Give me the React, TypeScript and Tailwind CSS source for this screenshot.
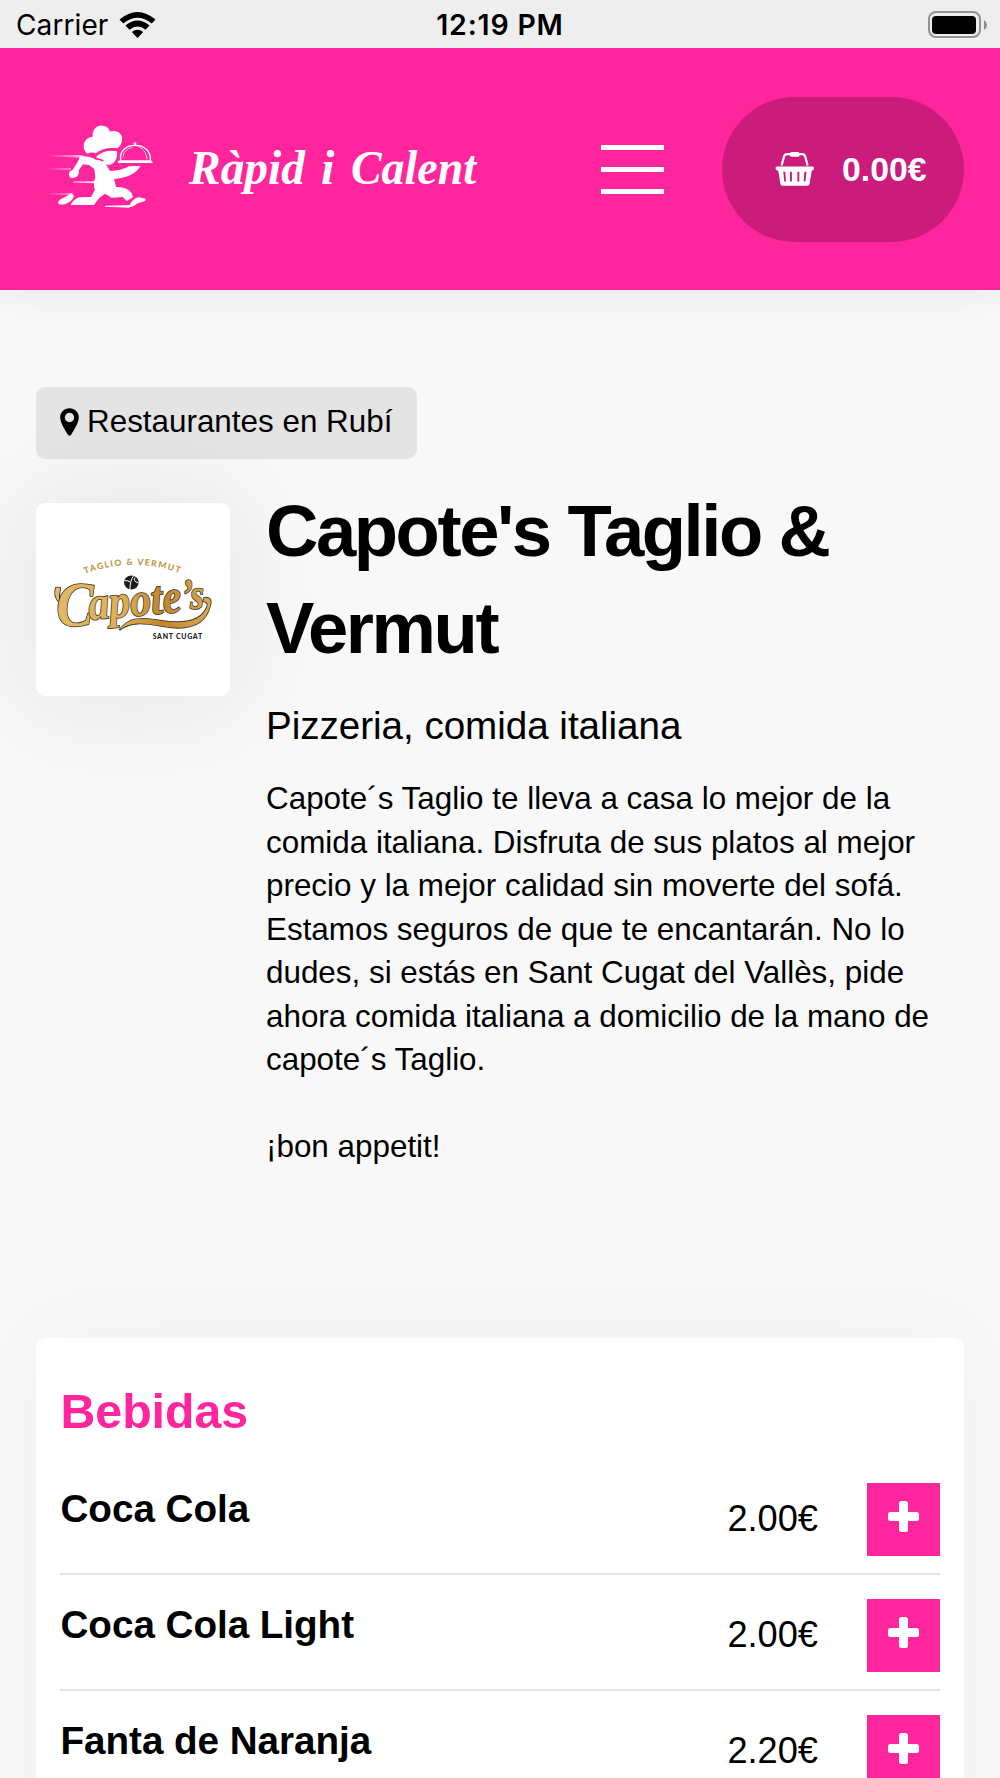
import React from 'react';

interface Product {
  id: number;
  name: string;
  price: string;
}

const products: Product[] = [
  { id: 1, name: 'Coca Cola', price: '2.00€' },
  { id: 2, name: 'Coca Cola Light', price: '2.00€' },
  { id: 3, name: 'Fanta de Naranja', price: '2.20€' },
];

// Status bar
const StatusBar: React.FC = () => (
  <div className="relative z-10 grid h-12 grid-cols-3 items-center bg-[#efeeee] pr-[13px] pl-4 font-['Inter',sans-serif] text-[28px] leading-[48px] text-black">
    <div className="flex items-center gap-[11px] pt-[1px]">
      <span className="tracking-[0.1px]">Carrier</span>
      <svg width="37" height="28" viewBox="0 0 37 28">
        <path d="M.5 8.5Q18.500 -6.500 36.500 8.500L32.700 12.600Q18.500 .8 4.300 12.600Z" />
        <path d="M6.500 14.600Q18.500 4.500 30.500 14.600L26.500 18.700Q18.500 12.200 10.500 18.700Z" />
        <path d="M12.800 21Q18.500 16.300 24.200 21L18.500 27Z" />
      </svg>
    </div>
    <div className="pt-[1px] pr-[3px] text-center text-[28.5px] font-semibold tracking-[0.8px] whitespace-nowrap">12:19 PM</div>
    <div className="flex items-center justify-end gap-[3px]">
      <div className="flex h-[27px] w-[53px] items-center justify-center rounded-[8px] border-2 border-[#929292]">
        <div className="h-[18px] w-[44px] rounded-[4px] bg-black" />
      </div>
      <svg width="3" height="10" viewBox="0 0 3 10">
        <path d="M0 0Q3 2 3 5T0 10Z" fill="#8c8c8c" />
      </svg>
    </div>
  </div>
);

// Running chef with a tray
const ChefLogo: React.FC = () => (
  <svg width="140" height="110" viewBox="0 0 420 330" fill="#fff" className="mb-2">
    <defs>
      <linearGradient id="speed" x1="0" x2="1">
        <stop offset="0" stopColor="#fff" stopOpacity="0" />
        <stop offset=".6" stopColor="#fff" stopOpacity=".9" />
        <stop offset="1" stopColor="#fff" />
      </linearGradient>
    </defs>
    <path d="M172 131C153 115 159 83 188 80C186 55 204 45 216 47C231 47 239 57 239 65C261 58 280 72 276 92C274 105 267 111 261 115C235 111 213 117 198 130Q184 124 172 131Z" />
    <path d="M200 138Q228 117 261 124C263 143 257 160 239 165C224 164 217 157 221 150L200 143Z" />
    <path d="M150 139Q178 137 198 149Q215 149 226 160L240 183Q278 181 297 169L331 168C318 193 286 205 252 207L258 231Q290 229 305 249L309 262L290 273L278 261L245 263L225 251L208 263L192 285L122 285Q129 269 148 262L183 261L195 239Q188 223 196 201L193 177L177 165L159 163L146 181C150 197 137 207 121 203C114 194 116 184 128 180L145 152Z" />
    <path d="M84 279C88 262 110 263 125 248L132 258C128 274 106 287 88 283ZM299 290C300 276 316 262 327 262L347 266C349 277 331 273 319 283C309 290 303 293 299 290Z" />
    <path d="M264 153L270 151H363L369 159H264Z" />
    <path d="M272 151C268 125 286 106 315 106C344 106 363 125 361 151" fill="none" stroke="#fff" strokeWidth="4" />
    <path d="M326 110Q350 122 351 151" fill="none" stroke="#fff" strokeWidth="3" strokeDasharray="5 2" />
    <path d="M279 142C280 125 291 114 308 113" fill="none" stroke="#fff" strokeWidth="2" />
    <circle cx="315" cy="101" r="4" />
    <path d="M57 135H155L170 144L57 139ZM50 174H124L119 181L50 178ZM130 214H198V220L130 218ZM45 249H126L117 256L45 253ZM225 287L305 285L298 293L225 290Z" fill="url(#speed)" />
  </svg>
);

const Wordmark: React.FC = () => (
  <svg
    width="300"
    height="80"
    viewBox="0 0 300 80"
    className="overflow-visible font-['Liberation_Serif',serif] text-[48px] font-bold italic"
    fill="#fff"
  >
    <text x="19" y="55" textLength="116" lengthAdjust="spacingAndGlyphs">Ràpid</text>
    <text x="151" y="55">i</text>
    <text x="181" y="55" textLength="125" lengthAdjust="spacingAndGlyphs">Calent</text>
  </svg>
);

const BasketIcon: React.FC = () => (
  <svg width="40" height="36" viewBox="0 0 40 36" className="shrink-0">
    <path d="M6.600 14.500L9 5.500Q9.700 3.200 12.200 3.200H27Q29.500 3.200 30.200 5.500L32.600 14.500" fill="none" stroke="#fff" strokeWidth="2.200" />
    <rect x="15" y="1" width="9.500" height="4.800" rx="1.500" fill="#fff" />
    <path
      fillRule="evenodd"
      fill="#fff"
      d="M2 15.500H37.500Q39 15.500 39 17T37.500 19.500H36.800L34.500 33Q34.200 34.800 32.500 34.800H7.500Q5.700 34.800 5.400 33L3.200 19.500H2Q.5 18.500 .5 17T2 15.500ZM8.300 20.800L9.300 30.500H11L10.300 20.800ZM15 20.800V30.500H16.900V20.800ZM22.400 20.800V30.500H24.300V20.800ZM29.400 20.800L28.600 30.500H30.400L31.500 20.800Z"
    />
  </svg>
);

const Header: React.FC = () => (
  <header className="flex h-[242px] items-center bg-[#ff269d] pr-9 pl-[30px] shadow-[0_0_36px_rgba(0,0,0,0.08)]">
    <ChefLogo />
    <Wordmark />
    <button className="mt-[1px] ml-[131px] flex w-[63px] flex-col gap-4">
      <span className="h-[5px] bg-white" />
      <span className="my-[1px] h-[5px] bg-white" />
      <span className="h-[5px] bg-white" />
    </button>
    <button className="ml-auto flex h-[145px] w-[242px] items-center rounded-full bg-[#cb1c7c] pl-[53px] font-bold text-white">
      <BasketIcon />
      <span className="ml-[27px] text-[33.8px]">0.00€</span>
    </button>
  </header>
);

// Restaurant logo
const CapotesLogo: React.FC = () => (
  <svg width="194" height="193" viewBox="48 67 582 580">
    <defs>
      <linearGradient id="gold" gradientUnits="userSpaceOnUse" x1="100" x2="570" y1="0" y2="0">
        <stop offset="0" stopColor="#e3b965" />
        <stop offset=".45" stopColor="#dfb04f" />
        <stop offset=".7" stopColor="#c38429" />
        <stop offset="1" stopColor="#dda84f" />
      </linearGradient>
      <path id="arc" d="M195 280Q340 226 485 280" />
    </defs>
    <text className="font-['Lato',sans-serif] text-[26px] font-black" fill="#c4953f">
      <textPath href="#arc" textLength="290">TAGLIO &amp; VERMUT</textPath>
    </text>
    <ellipse cx="334" cy="306" rx="22" ry="21" fill="#1d1d1f" />
    <path d="M342 284Q329 300 330 328M313 300Q325 300 330 304M345 291Q338 302 355 307" fill="none" stroke="#fff" strokeWidth="3" />
    <g
      className="font-['Liberation_Serif',serif] font-bold italic"
      fill="url(#gold)"
      stroke="#333"
      strokeWidth="5"
      paintOrder="stroke"
    >
      <path d="M108 321C100 342 109 360 121 366C111 345 121 337 120 322Z" />
      <text x="108" y="438" textLength="112" lengthAdjust="spacingAndGlyphs" className="text-[190px]">C</text>
      <text x="208" y="418" textLength="280" lengthAdjust="spacingAndGlyphs" transform="rotate(-5 208 418)" className="text-[142px]">apote</text>
      <text x="484" y="385" textLength="68" lengthAdjust="spacingAndGlyphs" className="text-[130px]">’s</text>
      <path d="M298 449C330 405 370 414 420 420C480 430 545 430 563 375C564 366 558 364 550 362L553 352C570 349 576 359 571 374C555 448 480 448 420 436C370 427 330 423 298 449Z" />
    </g>
    <text x="398" y="476" textLength="149" className="font-['Lato',sans-serif] text-[21px] font-black" fill="#222">
      SANT CUGAT
    </text>
  </svg>
);

const PinIcon: React.FC = () => (
  <svg width="19" height="28" viewBox="0 0 19 28">
    <path fillRule="evenodd" d="M9.500 .3C4.300 .3 .2 4.300 .2 9.500C.2 14.500 4.700 21.500 7.900 26.700Q9.500 28.600 11.100 26.700C14.300 21.500 18.800 14.500 18.800 9.500C18.800 4.300 14.700 .3 9.500 .3ZM9.500 4.800A4.700 4.700 0 1 1 9.500 14.200A4.700 4.700 0 1 1 9.500 4.800Z" />
  </svg>
);

const RestaurantInfo: React.FC = () => (
  <section className="px-9 pt-[97px]">
    <a className="flex h-[72px] w-[381px] items-center gap-2 rounded-[9px] bg-black/8 pb-[2px] pl-6 text-[31.4px] whitespace-nowrap">
      <PinIcon />
      Restaurantes en Rubí
    </a>
    <div className="mt-6 flex items-start gap-9">
      <div className="mt-5 h-[193px] w-[194px] shrink-0 overflow-hidden rounded-[9px] bg-white shadow-[0_0_100px_rgba(0,0,0,0.09)]">
        <CapotesLogo />
      </div>
      <div className="relative w-[700px]">
        <h1 className="text-[72.46px] leading-[96.6px] font-bold tracking-[-2.42px]">
          Capote's Taglio &amp;
          <br />
          Vermut
        </h1>
        <h2 className="mt-[21px] text-[38.65px] leading-[58px] tracking-[-0.05px]">Pizzeria, comida italiana</h2>
        <p className="mt-[22px] text-[31.4px] leading-[43.48px] whitespace-nowrap">
          Capote´s Taglio te lleva a casa lo mejor de la
          <br />
          comida italiana. Disfruta de sus platos al mejor
          <br />
          precio y la mejor calidad sin moverte del sofá.
          <br />
          Estamos seguros de que te encantarán. No lo
          <br />
          dudes, si estás en Sant Cugat del Vallès, pide
          <br />
          ahora comida italiana a domicilio de la mano de
          <br />
          capote´s Taglio.
          <br />
          <br />
          ¡bon appetit!
        </p>
      </div>
    </div>
  </section>
);

const ProductRow: React.FC<{ product: Product }> = ({ product }) => (
  <li className="flex h-[116px] items-start border-b-2 border-[#e3e3e3] pt-6">
    <h3 className="mt-1 ml-[0.5px] flex-1 text-[38.65px] leading-[44px] font-bold tracking-[-0.04px]">{product.name}</h3>
    <span className="mr-[49px] pt-[15px] text-[36.2px] leading-[42px]">{product.price}</span>
    <button className="flex h-[73px] w-[73px] justify-center bg-[#ff269d] pt-[18px]">
      <svg width="31" height="31" viewBox="0 0 31 31" fill="#fff">
        <rect x="11" width="9" height="31" rx="2.500" />
        <rect y="11" width="31" height="9" rx="2.500" />
      </svg>
    </button>
  </li>
);

export default function App() {
  return (
    <div className="h-[1778px] overflow-hidden bg-[#f8f8f8] font-['Liberation_Sans',Arial,sans-serif] text-black">
      <StatusBar />
      <Header />
      <RestaurantInfo />

      {/* Carta */}
      <section className="mx-9 mt-[169px] h-[500px] rounded-[10px] bg-white px-6 pt-[45px] shadow-[0_0_100px_rgba(0,0,0,0.03)]">
        <h2 className="ml-[0.5px] text-[48.3px] leading-[56px] font-bold tracking-[-0.05px] text-[#ff269d]">Bebidas</h2>
        <ul className="mt-5">
          {products.map((product) => (
            <ProductRow key={product.id} product={product} />
          ))}
        </ul>
      </section>
    </div>
  );
}
